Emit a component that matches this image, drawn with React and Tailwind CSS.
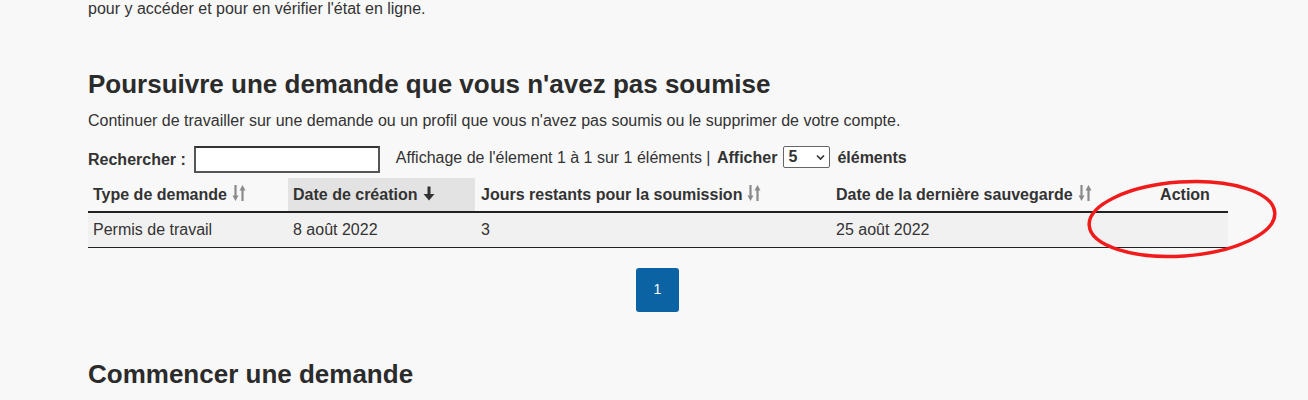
import React from "react";

const SortBoth = () => (
  <svg width="14" height="18" viewBox="0 0 14 18" className="inline-block ml-[5px] -mt-[4px] align-middle">
    <path d="M3.5 1v12" stroke="#8a8a8a" strokeWidth="2.2" />
    <path d="M0.5 11.5h6L3.5 17z" fill="#8a8a8a" />
    <path d="M10.5 17v-12" stroke="#8a8a8a" strokeWidth="2.2" />
    <path d="M7.5 6.5h6L10.5 1z" fill="#8a8a8a" />
  </svg>
);

const SortDown = () => (
  <svg width="14" height="17" viewBox="0 0 14 17" className="inline-block ml-[5px] -mt-[3px] align-middle">
    <path d="M7 1.5v9" stroke="#333" strokeWidth="3" />
    <path d="M1.5 9h11L7 15.5z" fill="#333" />
  </svg>
);

export default function App() {
  return (
    <div
      className="relative min-h-[400px] w-full overflow-hidden bg-[#f8f8f8] text-[#333]"
      style={{ fontFamily: "'Liberation Sans', Arial, Helvetica, sans-serif" }}
    >
      <div className="pl-[88px] w-[1228px]">
        <p className="text-[16px] leading-[20px] -mt-[1px]">
          pour y accéder et pour en vérifier l'état en ligne.
        </p>

        <h2 className="mt-[50px] text-[26px] leading-[30px] font-bold text-[#2b2b2b]">
          Poursuivre une demande que vous n'avez pas soumise
        </h2>
        <p className="mt-[11px] text-[16px] leading-[22px]">
          Continuer de travailler sur une demande ou un profil que vous n'avez pas soumis ou le supprimer de votre compte.
        </p>

        <div className="mt-[14px] flex items-center text-[16px] h-[27px]">
          <label className="font-bold">Rechercher :</label>
          <input
            type="text"
            className="ml-[8px] w-[186px] h-[27px] border-2 border-[#555] border-t-[#333] bg-white"
          />
          <span className="ml-[16px] -mt-[4px] whitespace-pre">Affichage de l'élement 1 à 1 sur 1 éléments | </span>
          <span className="ml-[2px] -mt-[4px] font-bold">Afficher</span>
          <span className="ml-[6px] -mt-[6px] w-[47px] h-[22px] border border-[#666] rounded-[2px] bg-white flex items-center justify-between pl-[4px] pr-[3px]">
            <span className="font-bold">5</span>
            <svg width="11" height="8" viewBox="0 0 11 8">
              <path d="M2 2.5l3.5 3.5 3.5-3.5" stroke="#333" strokeWidth="1.6" fill="none" />
            </svg>
          </span>
          <span className="ml-[7px] -mt-[4px] font-bold">éléments</span>
        </div>

        <table className="mt-[5px] w-[1140px] border-collapse text-[16px] table-fixed">
          <colgroup>
            <col className="w-[200px]" />
            <col className="w-[187px]" />
            <col className="w-[356px]" />
            <col className="w-[311px]" />
            <col className="w-[86px]" />
          </colgroup>
          <thead>
            <tr className="h-[34px] border-b-2 border-[#222]">
              <th className="text-left font-bold px-[5px] whitespace-nowrap">
                Type de demande<SortBoth />
              </th>
              <th className="text-left font-bold px-[5px] bg-[#e3e3e3] whitespace-nowrap">
                Date de création<SortDown />
              </th>
              <th className="text-left font-bold px-[6px] whitespace-nowrap">
                Jours restants pour la soumission<SortBoth />
              </th>
              <th className="text-left font-bold px-[5px] whitespace-nowrap">
                Date de la dernière sauvegarde<SortBoth />
              </th>
              <th className="text-center font-bold px-[5px] whitespace-nowrap">Action</th>
            </tr>
          </thead>
          <tbody>
            <tr className="h-[35px] bg-[#f1f1f1] border-b border-[#222]">
              <td className="px-[5px]">Permis de travail</td>
              <td className="px-[5px]">8 août 2022</td>
              <td className="px-[6px]">3</td>
              <td className="px-[5px]">25 août 2022</td>
              <td className="px-[5px]"></td>
            </tr>
          </tbody>
        </table>

        <div className="mt-[20px] flex justify-center w-[1139px]">
          <button className="w-[43px] h-[44px] rounded-[3px] bg-[#0b63a3] text-white text-[14px]">1</button>
        </div>

        <h2 className="mt-[47px] text-[26px] leading-[30px] font-bold text-[#2b2b2b]">
          Commencer une demande
        </h2>
      </div>

      <svg
        className="absolute left-[1080px] top-[172px] pointer-events-none"
        width="210"
        height="95"
        viewBox="0 0 210 95"
      >
        <ellipse
          cx="102"
          cy="47"
          rx="93"
          ry="37"
          fill="none"
          stroke="#f21b1b"
          strokeWidth="3.5"
          transform="rotate(-4 102 47)"
        />
      </svg>
    </div>
  );
}
